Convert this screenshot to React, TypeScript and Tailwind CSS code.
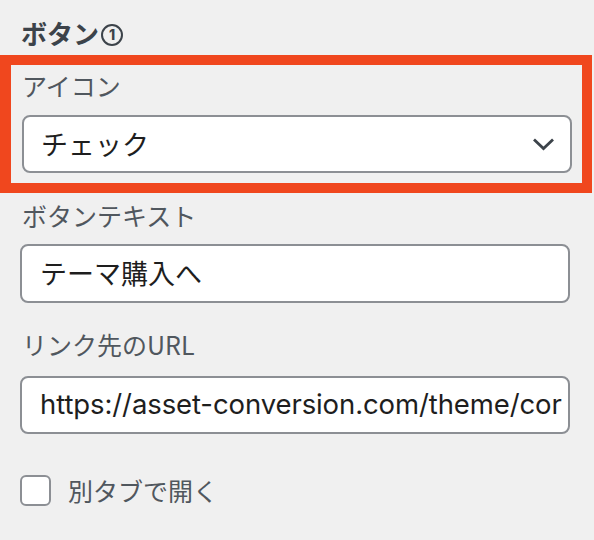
import React from "react";

const jp = { fontFamily: '"Noto Sans CJK JP", "Noto Sans", sans-serif' };
const url = { fontFamily: 'Inter, "Noto Sans CJK JP", sans-serif' };

export default function App() {
  return (
    <div className="w-[594px] h-[540px] bg-[#f0f0f0] overflow-hidden" style={jp}>
      <div className="pt-[18px] pl-[21px] h-[55px] text-[26px] font-bold text-[#3c434a] leading-[30px] flex items-start">
        <span>ボタン</span>
        <span className="ml-[2px] mt-[6px] w-[22px] h-[22px] rounded-full border-[2.5px] border-[#3c434a] text-[14px] font-extrabold leading-none flex items-center justify-center" style={{ fontFamily: "Inter, sans-serif" }}>1</span>
      </div>
      <div className="w-[592px] border-[#f0471e] border-y-[10px] border-l-[11px] border-r-[10px] pl-[11px] pr-[10px] pt-[2px] pb-[10px]">
        <div className="h-[48px] text-[25px] leading-[36px] text-[#50575e]">アイコン</div>
        <div className="h-[58px] bg-white border-2 border-[#8c8f94] rounded-[8px] flex items-center justify-between pl-[17px] pr-[15px]">
          <span className="text-[27px] text-[#1e1e1e]">チェック</span>
          <svg width="23" height="14" viewBox="0 0 23 14" fill="none">
            <path d="M2 2.5 L11.5 11.5 L21 2.5" stroke="#3c434a" strokeWidth="2.8" />
          </svg>
        </div>
      </div>
      <div className="pl-[20px] pr-[24px]">
        <div className="pt-[4px] h-[51px] text-[25px] leading-[36px] text-[#50575e] pl-[2px]">ボタンテキスト</div>
        <div className="h-[59px] bg-white border-2 border-[#8c8f94] rounded-[8px] flex items-center pl-[18px]">
          <span className="text-[27px] text-[#1e1e1e]">テーマ購入へ</span>
        </div>
        <div className="pt-[23px] h-[73px] text-[25px] leading-[36px] text-[#50575e] pl-[2px]">リンク先のURL</div>
        <div className="h-[58px] bg-white border-2 border-[#8c8f94] rounded-[8px] flex items-center pl-[18px] overflow-hidden whitespace-nowrap">
          <span className="text-[27.5px] tracking-[-0.1px] text-[#1e1e1e]" style={url}>https://asset-conversion.com/theme/cor</span>
        </div>
        <div className="mt-[38px] flex items-center gap-[17px]">
          <div className="w-[31px] h-[31px] rounded-[6px] bg-white border-2 border-[#8c8f94]" />
          <span className="text-[25px] text-[#50575e] leading-[36px]">別タブで開く</span>
        </div>
      </div>
    </div>
  );
}
